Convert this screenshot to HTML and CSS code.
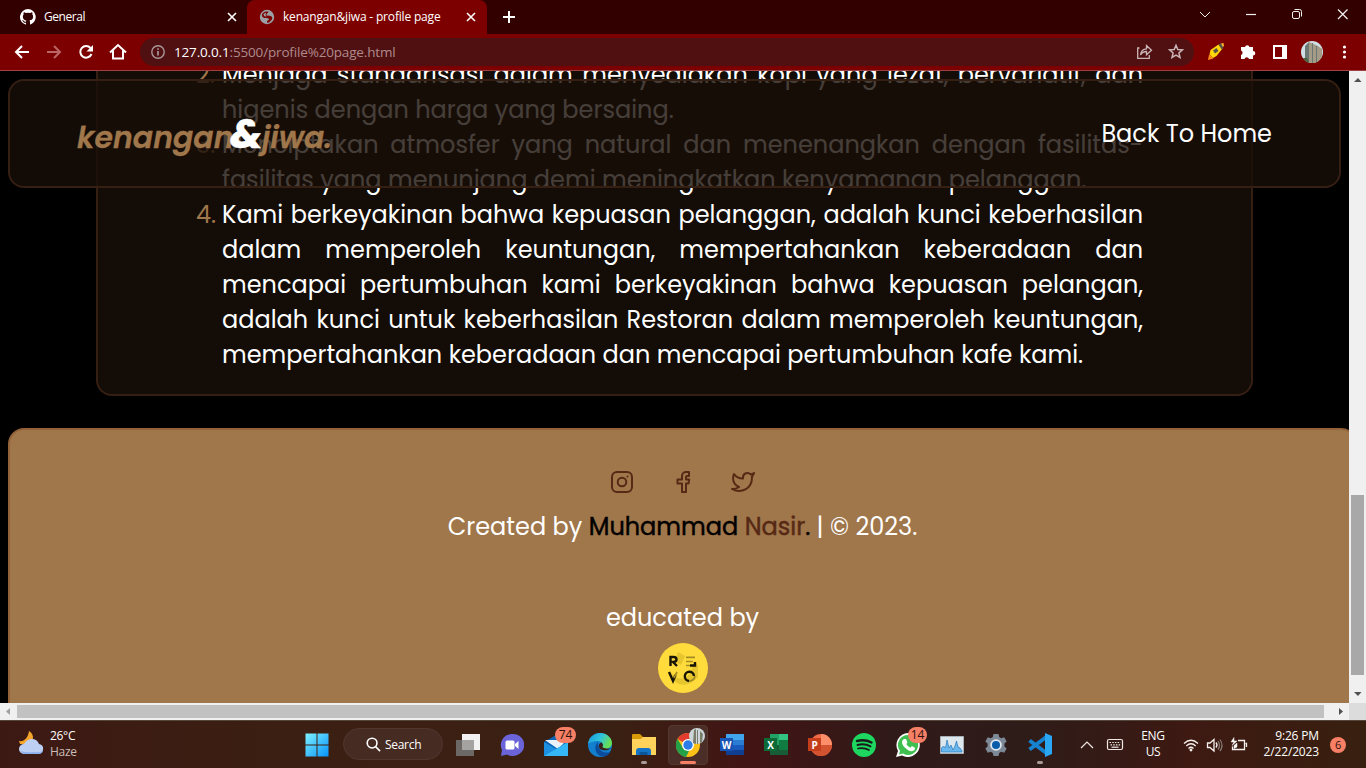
FILE: index.html
```html
<!DOCTYPE html>
<html lang="id">
<head>
<meta charset="utf-8">
<title>kenangan&amp;jiwa - profile page</title>
<link rel="stylesheet" href="styles.css">
</head>
<body>
<div class="tabs">
  <div class="tab tab-first">
    <svg class="fav" viewBox="0 0 16 16"><path fill="#fff" d="M8 0a8 8 0 0 0-2.5 15.6c.4.1.5-.2.5-.4v-1.5c-2.200.5-2.700-1-2.700-1-.4-.9-.9-1.200-.9-1.200-.7-.5.1-.5.1-.5.8.1 1.200.8 1.200.8.7 1.300 1.900.9 2.300.7.1-.5.3-.9.5-1.100-1.800-.2-3.600-.9-3.600-4 0-.9.3-1.600.8-2.100-.1-.2-.4-1 .1-2.100 0 0 .7-.2 2.200.8a7.500 7.500 0 0 1 4 0c1.500-1 2.200-.8 2.200-.8.4 1.100.2 1.900.1 2.100.5.6.8 1.300.8 2.100 0 3.100-1.900 3.700-3.700 4 .3.300.6.800.6 1.500v2.200c0 .2.1.5.5.4A8 8 0 0 0 8 0z"/></svg>
    <span>General</span>
    <svg class="x" viewBox="0 0 10 10"><path d="M1 1l8 8M9 1L1 9"/></svg>
  </div>
  <div class="tab tab-active">
    <svg class="fav" viewBox="0 0 16 16"><circle cx="8" cy="8" r="7.200" fill="#9aa0a6"/><path fill="#7d0000" d="M3 5.500C3.500 4 5 2.500 7.500 2.500c2-.2 2.500.5 1.500 1.300L7.500 5v1.500l3 .3c1.700.2 2.800 1 2.800 2l-.3 1.700-3 3-2 .3V12l2-1.300-.7-1.400-3-.3C4.500 8.800 2.500 8 3 5.500z"/><path fill="#9aa0a6" d="M4.500 5l2.500-1.500L6.500 6l1 1.800L5 7z"/></svg>
    <span class="t2">kenangan&amp;jiwa - profile page</span>
    <svg class="x" viewBox="0 0 10 10"><path d="M1 1l8 8M9 1L1 9"/></svg>
  </div>
  <svg class="plus" viewBox="0 0 12 12"><path d="M6 0v12M0 6h12"/></svg>
  <svg class="winctl" viewBox="0 0 166 34"><g fill="none" stroke="#eee"><path d="M0 12l5 5 5-5"/><path stroke-width="1.200" d="M46 14.500h10"/><rect x="92.500" y="11.500" width="7" height="7" rx="1.500"/><path d="M94.500 9.500h5q2 0 2 2v5"/><path stroke-width="1.300" d="M138 9.500l9.500 9.500M147.500 9.500L138 19"/></g></svg>
</div>
<div class="toolbar">
  <svg class="navicons" viewBox="0 0 140 36"><g fill="none" stroke="#fff" stroke-width="2"><path d="M29 18H16.500M22 12l-6 6 6 6"/><path stroke="#b66" d="M47 18h12.500M54 12l6 6-6 6"/><path d="M90.500 14A5.800 5.800 0 1 0 91.500 20"/><path fill="#fff" stroke="none" d="M93 11v6.500h-6.500z"/><path d="M110 18.500l8-7.500 8 7.500M113 16.500V24.500h10V16.500"/></g></svg>
  <div class="omnibox">
    <svg class="info" viewBox="0 0 14 14"><g fill="none" stroke="#aa9799" stroke-width="1.400"><circle cx="7" cy="7" r="6.200"/><path stroke-width="1.700" d="M7 6v4.500M7 3.200v1.600"/></g></svg>
    <div class="url"><b>127.0.0.1</b>:5500/profile%20page.html</div>
    <svg class="omni-actions" viewBox="0 0 50 28"><g fill="none" stroke="#c9b5b5" stroke-width="1.300"><path d="M3.500 10H1.700v10.300h11.600V17"/><path d="M4.500 17q.7-6 6-6.200V7.500l5 4.700-5 4.500v-3.200q-4 0-6 3.500z"/><path stroke-width="1.500" d="M40 7.300l1.800 4.200 4.600.4-3.500 3 1.100 4.500-4-2.400-4 2.400 1.100-4.500-3.500-3 4.600-.4z"/></g></svg>
  </div>
  <svg class="exts" viewBox="0 0 166 36"><path fill="#ff8a1c" d="M8 26l1-5.500 4.500 4z"/><path fill="#ffd60a" d="M9.500 20.500l1-4.500 8-5.500 4 4-6 7.500-3.500 2z"/><path fill="#55544c" d="M13 16.500l3.500-2.500 2 3-3.500 2.500z"/><path fill="#55544c" d="M18.500 10.500l2.500-1.300 2.500 2-.5 3-1.500 1z"/><path fill="#ffb429" d="M21 9.500l2.500-.5.5 3-1.200 1z"/>
    <path fill="#fff" d="M41 13h4a2.300 2.300 0 0 1 4.500 0H53v4a2.300 2.300 0 0 1 0 4.600V25h-4a2.300 2.300 0 0 0-4.500 0H41v-4a2.400 2.400 0 0 0 0-4.500z"/>
    <path fill="#fff" fill-rule="evenodd" d="M73 11h14v14H73zM75 13v10h7V13z"/>
    <clipPath id="av"><circle cx="112" cy="18" r="11"/></clipPath><g clip-path="url(#av)"><path fill="#cfdfe6" d="M100 6h24v24h-24z"/><path fill="#a49c87" d="M109 8l9 4 4 3v14h-13z"/><path fill="#6b7773" d="M105 12l4-4v21h-4zM112 9h1v20h-1zM116 12h1v18h-1z"/><path fill="#48633b" d="M101 24h6l3 6h-9z"/></g>
    <g fill="#fff"><circle cx="144.500" cy="13" r="1.600"/><circle cx="144.500" cy="18" r="1.600"/><circle cx="144.500" cy="23" r="1.600"/></g></svg>
</div>
<div class="viewport">
  <div class="page">
    <nav class="navbar">
      <div class="logo"><span class="l1">kenangan</span><span class="amp">&amp;</span><span class="l2">jiwa.</span></div>
      <a class="home">Back To Home</a>
    </nav>
    <section class="card">
      <ol class="missions" start="2">
        <li><i>2.</i><p class="full">Menjaga standarisasi dalam menyediakan kopi yang lezat, bervariatif, dan</p><p>higenis dengan harga yang bersaing.</p></li>
        <li><i>3.</i><p class="full">Menciptakan atmosfer yang natural dan menenangkan dengan fasilitas-</p><p>fasilitas yang menunjang demi meningkatkan kenyamanan pelanggan.</p></li>
        <li><i>4.</i><p class="full">Kami berkeyakinan bahwa kepuasan pelanggan, adalah kunci keberhasilan</p><p class="full">dalam memperoleh keuntungan, mempertahankan keberadaan dan</p><p class="full">mencapai pertumbuhan kami berkeyakinan bahwa kepuasan pelangan,</p><p class="full">adalah kunci untuk keberhasilan Restoran dalam memperoleh keuntungan,</p><p>mempertahankan keberadaan dan mencapai pertumbuhan kafe kami.</p></li>
      </ol>
    </section>
    <footer class="footer">
      <div class="socials">
        <svg viewBox="0 0 24 24"><rect x="2" y="2" width="20" height="20" rx="5"/><circle cx="12" cy="12" r="4.300"/><path d="M17.500 6.500h.01"/></svg>
        <svg viewBox="0 0 24 24"><path d="M18 2h-3a4 4 0 0 0-4 4v3.500H6.500v4H11V22h4v-8.500h2.500l.7-4H15V7a1 1 0 0 1 1-1h2z"/></svg>
        <svg viewBox="0 0 24 24"><path d="M23 3a10.900 10.900 0 0 1-3.140 1.530 4.480 4.480 0 0 0-7.860 3v1A10.660 10.660 0 0 1 3 4s-4 9 5 13a11.640 11.640 0 0 1-7 2c9 5 20 0 20-11.500a4.500 4.500 0 0 0-.08-.83A7.720 7.720 0 0 0 23 3z"/></svg>
      </div>
      <div class="credit"><span>Created by <b>Muhammad <em>Nasir</em>.</b> | © 2023.</span></div>
      <div class="educated">educated by</div>
      <svg class="revo" viewBox="0 0 50 50"><circle cx="25" cy="25" r="25" fill="#ffdc3b"/><path d="M20 9l7 4-4 9-7-4zM13 29q8 12 19 2l4-12 4 3v12q-13 14-25 3z" fill="#e6c52f"/><g fill="none" stroke="#171403" stroke-width="2.400"><path d="M12.500 23v-9h3q3 0 3 2.500T15 19l4 4"/><path d="M11 29l4 9 2.500-6"/><path d="M31 38a4.600 4.600 0 1 1 5-5"/><path d="M32 22.500h5V19"/></g><g fill="none" stroke="#a28b23" stroke-width="1.700"><path d="M28 14.300h9M28 18.500h7M28 22.500h4M16 35l3-6M31 38q5 0 6-5"/></g></svg>
    </footer>
  </div>
  <div class="vscroll"><svg viewBox="0 0 17 17"><path d="M5 11l4-4 3.500 4z"/></svg><div class="vthumb"></div><svg viewBox="0 0 17 17"><path d="M5 6h7.500L9 10z"/></svg></div>
</div>
<div class="hscroll"><svg viewBox="0 0 17 17"><path fill="#a0a0a0" d="M10 5v7L6 8.500z"/></svg><div class="hthumb"></div><svg class="hr" viewBox="0 0 25 17"><path fill="#505050" d="M15 5v7l4-3.500z"/></svg><div class="corner"></div></div>
<div class="taskbar">
  <div class="weather">
    <svg viewBox="0 0 26 26"><path fill="#f5a52a" d="M11 1c6 3 5 12-1 13H2L1 11c5 1 9-3 10-10z"/><path fill="#bdd0f4" d="M6 24a5 5 0 0 1 0-10q3-5 8-5t7 5q5 1 4 6-1 4-5 4z"/><path fill="#8db0ec" d="M2 21q2 3 5 3h13q4 0 5-3-4 2-9 1-7 1-14-1z"/></svg>
    <div class="wtext"><span>26°C</span><span class="dim">Haze</span></div>
  </div>
  <div class="start"><svg viewBox="0 0 24 24"><defs><linearGradient id="win" x2="1" y2="1"><stop stop-color="#7ef0ff"/><stop offset="1" stop-color="#0794fa"/></linearGradient></defs><path fill="url(#win)" d="M.5.500H11.500v11H.5zM12.500.500H23.500v11H12.500zM.5 12.500H11.500v11H.5zM12.500 12.500H23.500v11H12.500z"/></svg></div>
  <div class="search"><svg viewBox="0 0 16 16"><circle cx="6.500" cy="6.500" r="5.200"/><path d="M10.200 10.200L15 15"/></svg><span>Search</span></div>
  <div class="apps">
    <div class="app"><svg viewBox="0 0 24 24"><path fill="#f2f2f2" d="M6 1h18v16H6z"/><path fill="#6b6866" d="M0 7h18v16H0z"/><path fill="#a5a3a2" d="M6 7h12v10H6z"/></svg></div>
    <div class="app"><svg viewBox="0 0 24 24"><path fill="#6a64d8" d="M12 1a11.500 11 0 1 1-5 20.500L1 23l1-6A11 11 0 0 1 12 1z"/><rect x="5.500" y="7.500" width="9" height="9" rx="1.500" fill="#fff"/><path fill="#fff" d="M15 11l3.500-3v8L15 13z"/></svg></div>
    <div class="app"><svg viewBox="0 0 24 24"><path fill="#0b63b5" d="M0 9l12-7 12 7v8H0z"/><path fill="#e8f2fb" d="M1 7h22l-9 9z"/><path fill="#1c8fe0" d="M0 9l12 7 12-7v14H0z"/><path fill="#35b7f5" d="M0 23L24 9v14z"/></svg><span class="badge">74</span></div>
    <div class="app"><svg viewBox="0 0 24 24"><defs><linearGradient id="ed" x2="1" y2=".4"><stop stop-color="#1793d8"/><stop offset=".55" stop-color="#2fc3dd"/><stop offset="1" stop-color="#67df55"/></linearGradient></defs><circle cx="12" cy="12" r="12" fill="#1380cf"/><path fill="url(#ed)" d="M0 11C1 4 6 0 12 0c7 0 12 5 12 10 0 6-8 7-10 4 2-2 0-6-4-6-5 0-9 2-10 3z"/><path fill="#0b4d9c" d="M10 9c-5 4-3 14 5 14.500 3 0 6-2 8-5-5 3-14 0-13-9.500z"/><path fill="#3b211a" d="M13.500 9.500c-4 1-4 7 2 7.800 4 .4 6-1 8-2.300-2 1-7 1-9.300-1 1.400-1 1-3-.7-4.500z"/></svg></div>
    <div class="app"><svg viewBox="0 0 24 24"><path fill="#d99a0a" d="M0 2q0-1 1-1h7l3 3v4H0z"/><path fill="#ffd25c" d="M0 6h9l2-2h13v18H0z"/><path fill="#1373c4" d="M4 22v-4q0-3 3-3h9q3 0 3 3v4z"/><path fill="#0b569b" d="M7.500 19h8v3h-8z"/></svg><u></u></div>
    <div class="app active"><svg viewBox="0 0 24 24"><circle cx="12" cy="12" r="12" fill="#fbc116"/><path fill="#e33b2e" d="M12 12L1.600 6A12 12 0 0 1 22.400 6H12z"/><path fill="#24a148" d="M12 12l1 6-3 6A12 12 0 0 1 1.600 6L7 15z"/><circle cx="12" cy="12" r="6" fill="#fff"/><circle cx="12" cy="12" r="4.700" fill="#2b7de9"/></svg><svg class="avatar" viewBox="0 0 16 16"><circle cx="8" cy="8" r="8" fill="#cbd7d8"/><path fill="#7c7c6c" d="M5 2l2-1v15l-3-1zM8 2h1v14H8zM11 3l3 3-1 8-2 1z"/></svg><u class="on"></u></div>
    <div class="app"><svg viewBox="0 0 24 24"><path fill="#41a5ee" d="M6 1h18v6H6z"/><path fill="#2b7cd3" d="M6 7h18v5H6z"/><path fill="#185abd" d="M6 12h18v5H6z"/><path fill="#103f91" d="M6 17h18v5H6z"/><path fill="#1854b4" d="M0 5h13v13H0z"/><text x="6.500" y="15.500">W</text></svg></div>
    <div class="app"><svg viewBox="0 0 24 24"><path fill="#21a366" d="M6 1h9v11H6z"/><path fill="#33c481" d="M15 1h9v6h-9z"/><path fill="#107c41" d="M15 7h9v5h-9z"/><path fill="#185c37" d="M6 12h18v10H6z"/><path fill="#107c41" d="M15 12h9v5h-9z"/><path fill="#0d6b38" d="M0 5h13v13H0z"/><text x="6.500" y="15.500">X</text></svg></div>
    <div class="app"><svg viewBox="0 0 24 24"><circle cx="13" cy="12" r="11" fill="#ed6c47"/><path fill="#ff8f6b" d="M13 1a11 11 0 0 1 11 11H13z"/><path fill="#d35230" d="M2 12h22a11 11 0 0 1-22 0z"/><path fill="#c43e1c" d="M0 5h13v13H0z"/><text x="6.500" y="15.500">P</text></svg></div>
    <div class="app"><svg viewBox="0 0 24 24"><circle cx="12" cy="12" r="12" fill="#1ed760"/><g fill="none" stroke="#191a19" stroke-linecap="round"><path stroke-width="2.400" d="M5 8q8-2 14.500 1.500"/><path stroke-width="2" d="M5.500 12q7-1.800 13 1.400"/><path stroke-width="1.700" d="M6 15.500q6-1.200 11 1.500"/></g></svg></div>
    <div class="app"><svg viewBox="0 0 24 24"><path fill="#fff" d="M12 0a12 12 0 1 1-6 22.500L0 24l2-6A12 12 0 0 1 12 0z"/><path fill="#3fbf4f" d="M12 2a10 10 0 1 1-5 18.600L3 21.500 4 18A10 10 0 0 1 12 2z"/><path fill="#fff" d="M8 6l2 0 1.500 3.500-1.200 1.500q1.500 2.800 4 3.800l1.600-1.700 3.100 1.700q0 3.200-3.300 3.400C11 18 6 12.500 6 9q.3-2.300 2-3z"/></svg><span class="badge b14">14</span></div>
    <div class="app"><svg viewBox="0 0 24 24"><path fill="#dce7ee" stroke="#a8b0b5" d="M.5 3.500h23v17H.5z"/><path fill="#69b7ec" stroke="#2679bb" stroke-width=".7" d="M1.500 19v-4l2-2 2 2 1.500-8 2 8 2-3 2 5 2-4 1.500-5 1.500 6 2 1 2 3v1z"/></svg></div>
    <div class="app"><svg viewBox="0 0 24 24"><path fill="#7d8996" d="M9.500 1h5l.7 3 2 1.200 3-1 2.500 4.300-2.300 2v3l2.300 2-2.500 4.300-3-1-2 1.200-.7 3h-5l-.7-3-2-1.200-3 1L1.300 15.500l2.300-2v-3l-2.300-2 2.500-4.300 3 1 2-1.200z"/><circle cx="12" cy="12" r="5.800" fill="#dfe8ef"/><circle cx="12" cy="12" r="4" fill="#0b5cab"/></svg></div>
    <div class="app"><svg viewBox="0 0 24 24"><path fill="none" stroke="#1683d0" stroke-width="4" d="M1.500 7.500L19 20.500M1.500 16.500L19 3.500"/><path fill="#2aa7f3" d="M17 0l7 3v18l-7 3z"/></svg><u></u></div>
  </div>
  <svg class="tray" viewBox="0 0 45 20"><g fill="none" stroke="#f0e8e6" stroke-width="1.200"><path d="M1 13l6-6 6 6"/><rect x="27.500" y="4.500" width="15" height="10" rx="1.500"/><path stroke-dasharray="1.500 1.200" d="M29.500 7.500h11M30.500 9.800h10"/><path d="M31.500 12.200h7"/></g></svg>
  <div class="lang"><span>ENG</span><span>US</span></div>
  <svg class="status" viewBox="0 0 66 20"><g fill="none" stroke="#f5efed" stroke-width="1.300"><path d="M1 8.500q7-6.500 14 0M3.300 11q4.700-4.400 9.400 0M5.500 13.500q2.500-2.400 5 0"/><circle cx="8" cy="15" r=".8" fill="#fff"/><path d="M24.500 8v4.500h2.500l4 3.500V4.500L27 8zM33 7.500q2 2.500 0 5"/><path stroke="#857570" d="M35 6q3 4.300 0 8.500M37 4.500q4 6 0 11.500"/><path d="M55 5.500h6.500v9H49.500v-3M62.500 8.500h1v3.500"/><path fill="#fff" stroke-width=".5" d="M51 2.500l-3 4.500h3L49 10.500l5-4.500h-3zM51 13.500v-3l3-2.500v4z"/></g></svg>
  <div class="clock"><span>9:26 PM</span><span>2/22/2023</span></div>
  <div class="notif">6</div>
</div>
</body>
</html>
```
FILE: styles.css
```css
* { box-sizing: border-box; }
body { margin: 0; width: 1366px; height: 768px; overflow: hidden; display: flex; flex-direction: column; background: #000; font-family: "Open Sans", "Noto Sans", sans-serif; color: #fff; }
svg { display: block; flex: none; }
.tabs { flex: none; height: 34px; background: #330000; display: flex; font-size: 12px; letter-spacing: -.18px; position: relative; }
.tab { display: flex; align-items: center; height: 34px; padding-bottom: 1px; }
.tab span { flex: 1; white-space: nowrap; }
.tab-first { width: 247px; padding: 0 10px 1px 20px; letter-spacing: -.45px; }
.tab-active { width: 240px; padding: 0 11px 1px 12px; background: #7d0000; border-radius: 8px 8px 0 0; }
.fav { width: 16px; height: 16px; margin-right: 8px; }
.x { width: 10px; height: 10px; fill: none; stroke: #fff; stroke-width: 1.6; }
.plus { width: 12px; height: 12px; margin: 11px 0 0 16px; fill: none; stroke: #fff; stroke-width: 2; }
.winctl { width: 166px; height: 34px; margin-left: auto; }
.toolbar { flex: none; height: 37px; background: #7d0000; border-bottom: 1px solid #a04040; display: flex; }
.navicons { width: 140px; height: 36px; }
.omnibox { width: 1054px; height: 28px; margin-top: 4px; border-radius: 14px; background: #501012; display: flex; align-items: center; padding-left: 11px; }
.info { width: 14px; height: 14px; }
.url { margin: -1px 0 0 9px; font-size: 13.5px; letter-spacing: -.16px; color: #ae8a8b; }
.url b { font-weight: 400; color: #fff; }
.omni-actions { width: 50px; height: 28px; margin-left: auto; margin-right: 8px; }
.exts { width: 166px; height: 36px; margin-left: 6px; }
.viewport { flex: none; height: 632px; display: flex; }
.page { position: relative; width: 1349px; height: 632px; overflow: hidden; background: #000; font-family: Poppins, Inter, sans-serif; font-size: 24px; line-height: 35px; }
.navbar { position: absolute; z-index: 2; left: 8px; top: 8px; width: 1333px; height: 109px; border: 2px solid #351f13; border-radius: 16px; background: rgba(24, 14, 7, .8); display: flex; justify-content: space-between; align-items: center; padding: 0 67px; }
.logo { display: flex; align-items: baseline; margin-top: 4px; font-size: 30px; font-weight: 600; font-style: italic; color: #a0764b; -webkit-text-stroke: .3px; }
.l1 { width: 153px; }
.amp { width: 32px; font-size: 40px; font-weight: 800; color: #fff; }
.l2 { width: 70px; }
.card { width: 1157px; height: 341px; margin: -16px 0 0 96px; padding: 2px 108px 0 98px; background: #140c06; border: 2px solid #351f13; border-top: 0; border-radius: 0 0 16px 16px; }
.missions { list-style: none; margin: 0; padding: 0; }
.missions li { display: grid; grid-template-columns: 26px 921px; white-space: nowrap; }
.missions p { margin: 0; grid-column: 2; height: 35px; }
.missions i { grid-row: 1; font-style: normal; color: #a0764b; }
.full { text-align: justify; text-align-last: justify; }
.footer { width: 1349px; height: 320px; margin: 32px 0 0 8px; background: #a0764b; border: 2px solid #936239; border-radius: 16px; display: flex; flex-direction: column; align-items: center; padding-top: 40px; }
.socials { display: flex; gap: 36px; }
.socials svg { width: 24px; height: 24px; margin: 0 .25px; fill: none; stroke: #562915; stroke-width: 2; stroke-linecap: round; stroke-linejoin: round; }
.credit { margin-top: 15px; white-space: nowrap; }
.credit b { font-weight: 400; color: #000; -webkit-text-stroke: .45px; }
.credit em { font-style: normal; color: #562915; }
.educated { margin-top: 56px; }
.revo { width: 50px; height: 50px; margin-top: 8px; }
.vscroll { width: 17px; height: 632px; background: #f0f0f0; display: flex; flex-direction: column; fill: #505050; }
.vscroll svg { width: 17px; height: 17px; }
.vthumb { width: 13px; height: 180px; margin: 407px 0 11px 2px; background: #a8a8a8; }
.hscroll { flex: none; height: 17px; background: #f0f0f0; display: flex; align-items: center; }
.hscroll svg { width: 17px; height: 17px; }
.hthumb { width: 1307px; height: 13px; background: #c1c1c1; }
.hscroll .hr { width: 25px; }
.corner { width: 17px; height: 17px; background: #dcdcdc; }
.taskbar { flex: none; height: 48px; border-top: 1px solid #55463c; background: linear-gradient(90deg, #3d1914, #3b1f12 20%, #3a2013 45%, #421414 55%, #301a19 65%, #2e1c19 75%, #3d1912 87%, #38200f); display: flex; align-items: center; font-size: 12px; letter-spacing: -.3px; position: relative; }
.weather { width: 305px; padding-left: 18px; display: flex; align-items: center; gap: 6px; }
.weather svg { width: 26px; height: 26px; margin-top: -4px; }
.wtext, .lang, .clock { display: flex; flex-direction: column; line-height: 16px; margin-top: -1px; }
.dim { color: #cbbdb8; }
.start svg { width: 24px; height: 24px; }
.search { width: 100px; height: 32px; margin: -1px 0 0 14px; border: 1px solid #503630; border-radius: 16px; background: #462b23; display: flex; align-items: center; padding-left: 22px; gap: 4px; }
.search svg { width: 15px; height: 15px; fill: none; stroke: #fff; stroke-width: 1.7; }
.apps { display: flex; gap: 4px; margin-left: 5px; }
.app { position: relative; width: 40px; height: 40px; display: grid; place-items: center; border-radius: 4px; }
.app > svg:first-child { width: 24px; height: 24px; }
.app.active { background: #4a2e27; border: 1px solid #54382f; }
.app text { fill: #fff; font: bold 10px "Open Sans", sans-serif; text-anchor: middle; }
.app u { position: absolute; bottom: 1px; left: 17px; width: 6px; height: 3px; border-radius: 2px; background: #a99c97; }
.app u.on { left: 11px; bottom: 0; width: 16px; background: #f67f65; }
.badge { position: absolute; top: 2px; left: 19px; width: 21px; height: 16px; border-radius: 8px; background: #f67f65; color: #2b120d; text-align: center; line-height: 16px; letter-spacing: -.2px; }
.b14 { left: 20px; width: 19px; }
.app .avatar { position: absolute; width: 16px; height: 16px; left: 20px; top: 2px; }
.tray { width: 45px; height: 20px; margin-left: 20px; }
.lang { width: 30px; margin-left: 13px; text-align: center; }
.status { width: 66px; height: 20px; margin-left: 15px; }
.clock { margin-left: auto; text-align: right; letter-spacing: -.15px; }
.notif { width: 16px; height: 16px; margin: 0 20px 0 11px; border-radius: 50%; background: #f67f65; color: #2b120d; text-align: center; font-size: 11px; line-height: 16px; }
```
